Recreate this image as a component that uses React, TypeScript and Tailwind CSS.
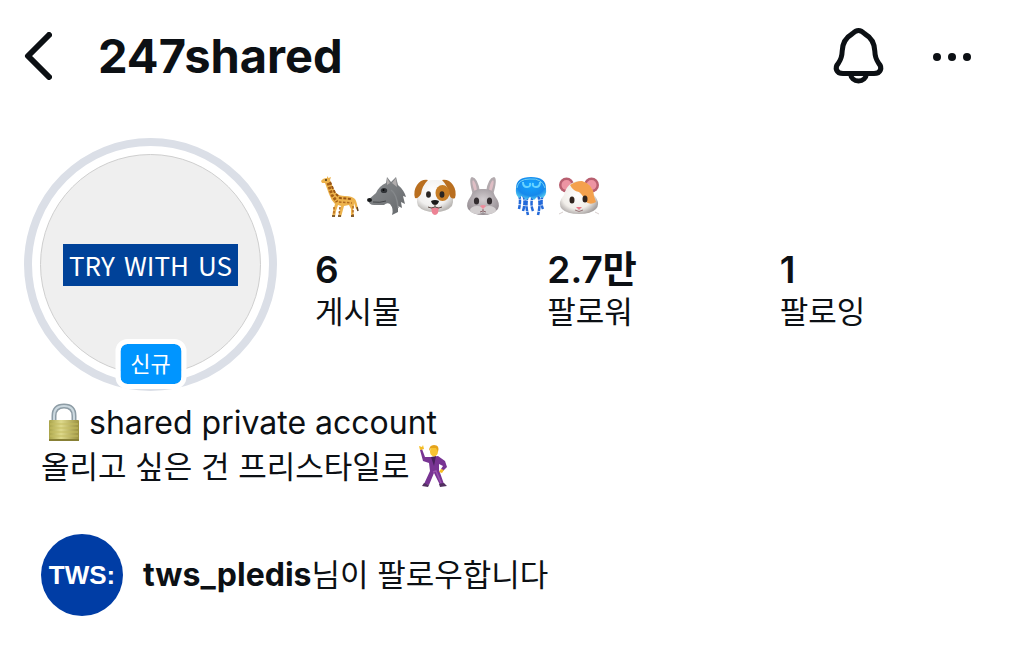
/**
 * ProfilePage
 * Profile header with avatar, stats, bio and mutual follower
 */

import React from 'react';

const Giraffe: React.FC = () => (
  <svg viewBox="0 0 40 44" className="w-10 h-11" aria-hidden="true">
    <path d="M2 6 Q4 3 8 3 L8 1 L9.500 3 L12 2 L11 5 Q13 12 17 18 Q20 21 26 21 Q33 21 36 24 Q38 27 39 35 L37 34 L35 28 Q35 33 34 35 L35 42 H32 L32 34 L30 30 L25 31 L22 42 H19 L22 31 L19 30 L17 36 L16 42 H13 L14 36 L16 29 Q12 25 10 19 L6 8 L3 8 Z" fill="#edb34d" />
    <path d="M9 8 L13 20 L18 27" stroke="#a65f16" strokeWidth="3" strokeDasharray="2.500 1.500" fill="none" />
    <path d="M11 7 L16 18 L21 23 L33 24" stroke="#995514" strokeWidth="2" strokeDasharray="3 1.500" fill="none" />
    <path d="M20 27 L33 28 M34 31 L34 40 M21 32 L20 40 M15 32 L15 39" stroke="#b16b20" strokeWidth="1.500" strokeDasharray="2.500 1.500" fill="none" />
    <path d="M13 41 H16 M19 41 H22 M32 41 H35 M38 32 L39 36" stroke="#604020" strokeWidth="1.500" />
    <circle cx="7" cy="5" r=".9" fill="#2d2014" />
  </svg>
);

const Wolf: React.FC = () => (
  <svg viewBox="0 0 40 44" className="w-10 h-11" aria-hidden="true">
    <defs>
      <linearGradient id="wolf-fur" x2="1" y2="1">
        <stop stopColor="#8c8f92" />
        <stop offset="1" stopColor="#65686b" />
      </linearGradient>
    </defs>
    <path d="M1 25 L9 18 Q12 11 19 8 L20 2 L24 7 L29 2 L31 10 Q37 15 39 22 L36 21 L38 29 L34 27 L35 33 L31 31 L31 37 L25 40 Q27 34 23 29 Q20 27 17 30 L7 30 Q2 30 1 25" fill="url(#wolf-fur)" />
    <path d="M20 3 L23 8 L20 10 Z M29 3 L30 12 L25 8 Z" fill="#b1adad" />
    <path d="M24 15 Q30 19 31 33" stroke="#85888b" strokeWidth="1.500" fill="none" />
    <path d="M6 27 Q13 28 19 26" stroke="#44474a" fill="none" />
    <ellipse cx="2.500" cy="25" rx="2.500" ry="2" fill="#17191b" />
    <ellipse cx="17" cy="15.500" rx="3.200" ry="2.600" fill="#303337" />
    <circle cx="16.500" cy="15" r="1" fill="#080808" />
  </svg>
);

const Dog: React.FC = () => (
  <svg viewBox="0 0 44 44" className="w-11 h-11" aria-hidden="true">
    <defs>
      <radialGradient id="dog-face" cx=".45" cy=".35" r=".65">
        <stop stopColor="#ffffff" />
        <stop offset=".7" stopColor="#f0efee" />
        <stop offset="1" stopColor="#bcb9b6" />
      </radialGradient>
    </defs>
    <path d="M22 5 Q35 4 37 16 Q42 24 39 31 Q34 37 22 37 Q10 37 5 31 Q2 24 7 16 Q9 4 22 5" fill="url(#dog-face)" />
    <path d="M15 5 Q8 4 4 10 Q0 16 2 23 Q5 24 8 19 Q9 11 15 5 M29 5 Q36 4 40 10 Q44 16 42 23 Q38 25 36 19 Q35 11 29 5" fill="#b96f20" />
    <ellipse cx="29.500" cy="18" rx="7" ry="8" fill="#c77d25" />
    <ellipse cx="15.500" cy="19.500" rx="2.400" ry="3.300" fill="#292522" />
    <ellipse cx="29" cy="19.500" rx="2.400" ry="3.300" fill="#292522" />
    <path d="M18 26 Q22 24 26 26 Q25 30 22 30 Q19 30 18 26" fill="#1b1a1a" />
    <path d="M18 32 Q22 34 26 32 L25 38 Q22 42 19 38 Z" fill="#ed8294" />
    <path d="M22 29 V32 Q18 34 15 32 M22 32 Q26 34 29 32" stroke="#5b4944" fill="none" />
  </svg>
);

const Rabbit: React.FC = () => (
  <svg viewBox="0 0 36 44" className="w-9 h-11" aria-hidden="true">
    <defs>
      <radialGradient id="rabbit-face" cx=".5" cy=".4" r=".6">
        <stop stopColor="#d2cdd0" />
        <stop offset="1" stopColor="#978f94" />
      </radialGradient>
    </defs>
    <path d="M8 20 Q3 3 7 2 Q13 3 15 17 M21 17 Q23 3 29 2 Q33 3 28 20" fill="#b3aaae" />
    <path d="M10 17 Q6 7 8 5 Q11 7 12 16 M24 16 Q25 7 28 5 Q30 7 26 17" fill="#dfbec5" />
    <path d="M18 14 Q28 13 30 21 Q36 29 33 34 Q28 40 18 40 Q8 40 3 34 Q0 29 6 21 Q8 13 18 14" fill="url(#rabbit-face)" />
    <ellipse cx="12" cy="35" rx="7" ry="4" fill="#d3cfd0" />
    <ellipse cx="24" cy="35" rx="7" ry="4" fill="#d3cfd0" />
    <ellipse cx="11.500" cy="26" rx="2.600" ry="3.500" fill="#332d30" />
    <ellipse cx="24.500" cy="26" rx="2.600" ry="3.500" fill="#332d30" />
    <path d="M15 31 Q18 29 21 31 L18 34 Z" fill="#ed8c9c" />
    <path d="M18 34 V36 M15 37 Q18 35 21 37" stroke="#8b696e" fill="none" />
  </svg>
);

const Jellyfish: React.FC = () => (
  <svg viewBox="0 0 36 44" className="w-9 h-11" aria-hidden="true">
    <defs>
      <radialGradient id="jelly" cx=".5" cy=".35" r=".65">
        <stop stopColor="#11a3ff" />
        <stop offset=".7" stopColor="#1689ec" />
        <stop offset="1" stopColor="#51c5ef" />
      </radialGradient>
    </defs>
    <path d="M6 19 Q8 25 6 34 M10 20 Q13 26 10 36 M15 20 Q12 29 15 40 M20 20 Q17 29 20 36 M25 20 Q28 28 25 40 M30 19 Q27 28 30 34" stroke="#2369d9" strokeWidth="2.500" strokeDasharray="5 .7" fill="none" />
    <path d="M3 13 Q3 2 18 2 Q33 2 33 13 Q34 21 29 23 L25 21 L21 25 L17 22 L13 25 L9 21 L6 23 Q2 20 3 13" fill="url(#jelly)" />
    <path d="M10 7 Q10 12 14 12 Q18 12 17 8 M20 8 Q19 12 23 12 Q27 12 27 7" stroke="#68d3ff" strokeWidth="2" fill="none" />
    <path d="M4 13 Q5 4 17 4 Q29 3 32 13" stroke="#70cdf2" strokeWidth="1" fill="none" />
  </svg>
);

const Hamster: React.FC = () => (
  <svg viewBox="0 0 42 44" className="w-[42px] h-11" aria-hidden="true">
    <defs>
      <radialGradient id="hamster-face" cx=".45" cy=".45" r=".6">
        <stop stopColor="#ffffff" />
        <stop offset=".65" stopColor="#f1eee9" />
        <stop offset="1" stopColor="#a6a1a0" />
      </radialGradient>
    </defs>
    <circle cx="8.500" cy="10" r="7.500" fill="#b85f70" />
    <circle cx="33.500" cy="10" r="7.500" fill="#b85f70" />
    <circle cx="8.500" cy="10" r="5" fill="#ed94a3" />
    <circle cx="33.500" cy="10" r="5" fill="#ed94a3" />
    <path d="M21 6 Q33 7 36 20 Q43 28 38 34 Q33 39 21 39 Q9 39 4 34 Q-1 28 6 20 Q9 7 21 6" fill="url(#hamster-face)" />
    <path d="M12 10 Q18 6 24 6 Q35 9 36 21 L38 27 Q32 31 27 26 Q25 20 21 17 Q15 16 12 10" fill="#f4a14d" />
    <ellipse cx="14" cy="25" rx="2.500" ry="3.600" fill="#30241e" />
    <ellipse cx="27" cy="24" rx="2.500" ry="3.600" fill="#30241e" />
    <path d="M18 32 H24 L21 35 Z" fill="#e87887" />
    <path d="M17 35 Q21 38 25 35" stroke="#98777a" fill="none" />
    <path d="M5 37 L1 39 M37 37 L41 39" stroke="#d8cfce" fill="none" />
  </svg>
);

const Lock: React.FC = () => (
  <svg viewBox="0 0 34 40" className="w-[34px] h-10" aria-hidden="true">
    <defs>
      <linearGradient id="lock-body">
        <stop stopColor="#a9a349" />
        <stop offset=".4" stopColor="#ded98b" />
        <stop offset="1" stopColor="#9b9140" />
      </linearGradient>
    </defs>
    <path d="M7 18 V13 Q7 3 17 3 Q27 3 27 13 V18" stroke="#8d9ca5" strokeWidth="5" fill="none" />
    <path d="M7 18 V13 Q7 3 17 3 Q27 3 27 13 V18" stroke="#cbd8df" strokeWidth="2" fill="none" />
    <rect x="2" y="17" width="30" height="21" rx="1" fill="url(#lock-body)" />
    <path d="M3 21 H31 M3 25 H31 M3 29 H31 M3 33 H31" stroke="#c5bd63" strokeWidth="1" />
    <path d="M2 37 H32" stroke="#888035" strokeWidth="2" />
  </svg>
);

const Dancer: React.FC = () => (
  <svg viewBox="0 0 30 44" className="w-[30px] h-11" aria-hidden="true">
    <path d="M3 5 L6 13 L13 13 L19 12 L26 17 L28 23 L24 27 L22 25 L24 22 L20 20 L20 26 L25 40 L21 41 L15 29 L10 41 L5 40 L11 27 L10 19 L4 17 L1 6 Z" fill="#783493" />
    <path d="M12 13 L15 22 L17 12 Z" fill="#47205d" />
    <path d="M14 28 L17 27 L22 39" stroke="#9852ae" strokeWidth="1.500" fill="none" />
    <path d="M1 6 L0 2 L3 3 L4 1 L5 5 M22 25 L20 28 L23 29 L25 26" fill="#f5bd24" />
    <ellipse cx="15" cy="7.500" rx="4" ry="5" fill="#f7c432" />
    <path d="M10 7 Q10 1 15 1 Q21 1 19 8 L17 4 L12 4 Z" fill="#e5a31b" />
    <path d="M3 42 L5 39 L10 41 L9 43 Z M20 40 L25 39 L28 42 L21 43 Z" fill="#51305f" />
  </svg>
);

const stats = [
  { label: '게시물', value: '6' },
  { label: '팔로워', value: '2.7만' },
  { label: '팔로잉', value: '1' },
];

export const ProfilePage: React.FC = () => {
  return (
    <div className="min-h-screen bg-white text-[#0c1014] font-['Inter','Noto_Sans_CJK_KR',sans-serif]">
      {/* Top Bar */}
      <header className="flex h-28 items-center pl-6 pr-[50px]">
        <button type="button" aria-label="뒤로" className="mr-[46px]">
          <svg viewBox="0 0 28 48" className="w-7 h-12" fill="none">
            <path d="M25 3 L4 24 L25 45" stroke="currentColor" strokeWidth="6" strokeLinecap="round" strokeLinejoin="round" />
          </svg>
        </button>
        <h1 className="flex-1 text-[47px] font-bold">247shared</h1>
        <button type="button" aria-label="알림" className="mr-11">
          <svg viewBox="0 0 54 60" className="w-[54px] h-[60px]" fill="none" stroke="currentColor" strokeWidth="5">
            <path d="M26.500 4.500 C23.500 4.500 22 6 20 8 C13 12 10.500 17 10.200 25 C10 31 9 33.500 6.500 37 C2 42 4.500 47.500 11 47.500 H42 C48.500 47.500 51 42 46.500 37 C44 33.500 43 31 42.800 25 C42.500 17 40 12 33 8 C31 6 29.500 4.500 26.500 4.500 Z" strokeLinejoin="round" />
            <path d="M18.500 48 C19 52 22 55 26.500 55 C31 55 34 52 34.500 48" />
          </svg>
        </button>
        <button type="button" aria-label="더 보기">
          <svg viewBox="0 0 44 12" className="w-11 h-3" fill="currentColor">
            <circle cx="7" cy="7" r="4" />
            <circle cx="22" cy="7" r="4" />
            <circle cx="37" cy="7" r="4" />
          </svg>
        </button>
      </header>

      <main className="pt-[26px]">
        {/* Avatar and Stats */}
        <section className="flex pl-6">
          <div className="relative mr-[38px] size-[253px] shrink-0 rounded-full border-8 border-[#dbdfe7] p-2">
            <div className="flex size-full items-center justify-center rounded-full border border-[#cfcfcf] bg-[#efefef]">
              <div className="flex h-[42px] w-[175px] items-center justify-between bg-[#004299] px-1.5 text-[26px] leading-none text-white font-['Noto_Sans_CJK_KR',sans-serif]">
                <span>TRY</span>
                <span>WITH</span>
                <span>US</span>
              </div>
            </div>
            <span className="absolute -bottom-1.5 left-1/2 flex h-[50px] w-[71px] -translate-x-1/2 items-center justify-center rounded-xl border-[5px] border-white bg-[#0095ff] bg-clip-padding text-[22px] leading-none text-white">
              신규
            </span>
          </div>

          <div className="flex-1 pt-[37px]">
            <div className="grid w-72 grid-cols-6 justify-items-center">
              <Giraffe />
              <Wolf />
              <Dog />
              <Rabbit />
              <Jellyfish />
              <Hamster />
            </div>
            <dl className="mt-[30px] grid grid-cols-3 pr-3">
              {stats.map((stat) => (
                <div key={stat.label} className="flex flex-col-reverse">
                  <dt className="text-[31px] leading-[42px]">{stat.label}</dt>
                  <dd className="text-[37px] leading-[42px] font-semibold">{stat.value}</dd>
                </div>
              ))}
            </dl>
          </div>
        </section>

        {/* Bio */}
        <section className="mt-2.5 pl-[41px] text-[31px] leading-[43px]">
          <p className="flex items-center gap-2 pl-1.5 text-[32px]">
            <Lock />
            shared private account
          </p>
          <p className="flex items-center gap-2.5">
            올리고 싶은 건 프리스타일로
            <Dancer />
          </p>
        </section>

        {/* Followed By */}
        <a href="#followers" className="mt-[46px] flex items-center gap-5 pl-[41px] text-[31px]">
          <span className="flex size-[82px] items-center justify-center rounded-full bg-[#003da5] text-[26px] font-bold text-white font-['Liberation_Sans',sans-serif]">
            TWS:
          </span>
          <span>
            <strong className="text-[32px] font-bold">tws_pledis</strong>님이 팔로우합니다
          </span>
        </a>
      </main>
    </div>
  );
};

export default ProfilePage;
